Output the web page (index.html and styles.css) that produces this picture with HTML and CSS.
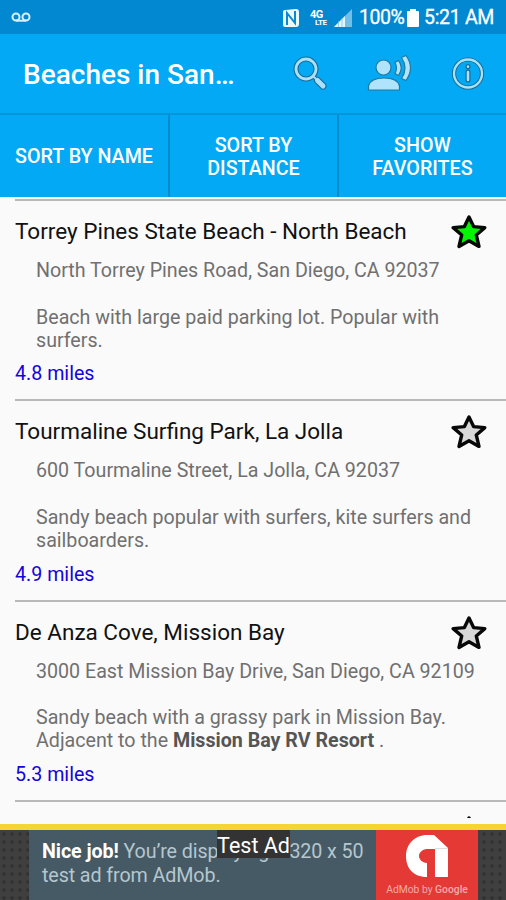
FILE: index.html
```html
<!DOCTYPE html>
<html lang="en">
<head>
<meta charset="utf-8">
<title>Beaches in San Diego</title>
<link rel="stylesheet" href="styles.css">
</head>
<body>
<svg width="0" height="0" class="defs">
  <symbol id="star" viewBox="0 0 36 36"><path d="M18 3l4.600 9.600 11.200 1-8.500 7.400 2.700 11.400L18 26.700 8 32.400l2.700-11.400-8.500-7.400 11.200-1z" stroke="#080808" stroke-width="3.400" stroke-linejoin="round"/></symbol>
</svg>
<div class="screen">
  <header class="status">
    <svg class="voicemail" width="20" height="11" viewBox="0 0 20 11" fill="none" stroke="#d7efff" stroke-width="2"><circle cx="5" cy="5" r="3.500"/><circle cx="15" cy="5" r="3.500"/><path d="M5 8.700h10"/></svg>
    <div class="indicators">
      <svg width="18" height="19" viewBox="0 0 18 19"><path d="M3 1L14 0q3 0 3 3v12q0 3-3 3L3 18q-2 0-2-2V3q0-2 2-2z" fill="#eaf7ff"/><path d="M5 16V4l8 10V2" fill="none" stroke="#0788d1" stroke-width="2"/></svg>
      <div class="lte"><span>4G</span><span class="low">LTE</span></div>
      <svg class="signal" width="18" height="18" viewBox="0 0 18 18"><path d="M0 18L18 0v18z" fill="#74bfe8"/><path d="M0 18L11 7v11z" fill="#e5f5ff"/><path d="M4.500 12v6M8 9v9" stroke="#74bfe8" stroke-width=".7"/></svg>
      <span class="pct">100%</span>
      <svg class="battery" width="12" height="18" viewBox="0 0 12 18"><path d="M3 0h6v2h2q1 0 1 1v14q0 1-1 1H1q-1 0-1-1V3q0-1 1-1h2z" fill="#fff"/></svg>
      <span class="time">5:21 AM</span>
    </div>
  </header>
  <div class="toolbar">
    <h1>Beaches in San…</h1>
    <svg class="actions" width="196" height="42" viewBox="0 0 196 42" fill="none">
      <g stroke-linecap="round">
        <circle cx="15" cy="15" r="10" stroke="#186b91" stroke-width="5"/><path d="M22 22l4 4" stroke="#186b91" stroke-width="4"/><path d="M26.500 26.500l5.500 5.500" stroke="#186b91" stroke-width="7"/>
        <circle cx="15" cy="15" r="10" stroke="#a9e0fb" stroke-width="2.800"/><path d="M22 22l4 4" stroke="#a9e0fb" stroke-width="2"/><path d="M26.500 26.500l5.500 5.500" stroke="#a9e0fb" stroke-width="5"/>
      </g>
      <g fill="#b0e4fc" stroke="#23799f" stroke-width="1.200">
        <circle cx="92.500" cy="13.500" r="7.500"/><path d="M77.500 36v-4q2-8 15.500-8t15.500 8v4z"/>
        <path d="M104 8.500l3.500-2q5.500 7.500 0 15l-3.500-2q3-5.500 0-11z"/><path d="M110.500 3.500l4.500-2q9 12.500 0 25l-4.500-2q7-10.500 0-21z"/>
      </g>
      <circle cx="177" cy="19.500" r="14" stroke="#186b91" stroke-width="4.200"/><circle cx="177" cy="19.500" r="14" stroke="#a9e0fb" stroke-width="2.300"/>
      <path d="M177 18v8M177 12.500v.2" stroke="#186b91" stroke-width="5" stroke-linecap="round"/><path d="M177 18v8M177 12.500v.2" stroke="#a9e0fb" stroke-width="2.600" stroke-linecap="round"/>
    </svg>
  </div>
  <nav class="tabs">
    <div class="tab">SORT BY NAME</div>
    <div class="tab">SORT BY<br>DISTANCE</div>
    <div class="tab">SHOW<br>FAVORITES</div>
  </nav>
  <main class="list">
    <article class="item">
      <div class="head"><h2>Torrey Pines State Beach - North Beach</h2><svg class="star on"><use href="#star"/></svg></div>
      <p class="addr">North Torrey Pines Road, San Diego, CA 92037</p>
      <p class="desc">Beach with large paid parking lot. Popular with<br>surfers.</p>
      <p class="dist">4.8 miles</p>
    </article>
    <article class="item">
      <div class="head"><h2>Tourmaline Surfing Park, La Jolla</h2><svg class="star"><use href="#star"/></svg></div>
      <p class="addr">600 Tourmaline Street, La Jolla, CA 92037</p>
      <p class="desc">Sandy beach popular with surfers, kite surfers and<br>sailboarders.</p>
      <p class="dist">4.9 miles</p>
    </article>
    <article class="item">
      <div class="head"><h2>De Anza Cove, Mission Bay</h2><svg class="star"><use href="#star"/></svg></div>
      <p class="addr">3000 East Mission Bay Drive, San Diego, CA 92109</p>
      <p class="desc">Sandy beach with a grassy park in Mission Bay.<br>Adjacent to the <b>Mission Bay RV Resort</b> .</p>
      <p class="dist">5.3 miles</p>
    </article>
    <article class="item"><div class="head"><h2></h2><svg class="star"><use href="#star"/></svg></div></article>
  </main>
  <footer class="ad">
    <div class="banner">
      <p class="copy"><b>Nice job!</b> You’re displaying a 320 x 50<br>test ad from AdMob.</p>
      <div class="brand">
        <svg width="44" height="44" viewBox="0 0 44 44"><path d="M22 43C8 43 1 34 1 22S10 1 22 1h7l14 13v29H30V15h-8c-5 0-8 4-8 7s3 7 8 7z" fill="#fff"/><path d="M30 14.500h13" stroke="#ddd"/></svg>
        <span>AdMob by <b>Google</b></span>
      </div>
    </div>
    <span class="label">Test Ad</span>
  </footer>
</div>
</body>
</html>
```
FILE: styles.css
```css
* { box-sizing: border-box; }
body, h1, h2, p { margin: 0; }
body { font-family: Roboto, sans-serif; background: #fafafa; }
.defs { position: absolute; }
.screen { width: 506px; height: 900px; overflow: hidden; display: flex; flex-direction: column; }
.status { height: 34px; flex: none; background: #0288d1; color: #fff; display: flex; align-items: center; justify-content: space-between; padding: 0 13px 0 11px; }
.indicators { display: flex; align-items: center; height: 34px; padding-top: 2px; }
.lte { width: 18px; height: 16px; margin-left: 10px; font-size: 11px; line-height: 9px; font-weight: 700; display: flex; flex-direction: column; letter-spacing: -.5px; }
.lte .low { font-size: 8px; line-height: 7px; padding-left: 5px; }
.signal { margin-left: 6px; }
.pct, .time { font-size: 19.500px; line-height: 34px; white-space: nowrap; -webkit-text-stroke: .3px #fff; }
.pct { width: 45px; margin-left: 7px; letter-spacing: -.5px; }
.battery { margin-left: 3px; }
.time { width: 69px; margin-left: 5px; letter-spacing: -.3px; }
.toolbar { height: 79px; flex: none; background: #03a9f4; display: flex; justify-content: space-between; align-items: flex-start; padding: 20px 19px 0 23px; }
.toolbar h1 { color: #fff; font-size: 28px; line-height: 42px; font-weight: 500; white-space: nowrap; }
.tabs { height: 84px; flex: none; display: grid; grid-template-columns: 168px 169px 1fr; background: #03a9f4; border-top: 2px solid #0496da; }
.tab { display: flex; align-items: center; justify-content: center; text-align: center; color: #fff; font-size: 19.700px; line-height: 23px; font-weight: 500; padding-top: 1px; white-space: nowrap; }
.tab + .tab { border-left: 2px solid #058bc9; }
.list { height: 621px; margin-bottom: 6px; flex: none; padding: 2px 0 0 15px; overflow: hidden; }
.item { height: 200.400px; border-top: 2px solid #b9b9b9; padding-top: 12px; }
.head { display: flex; justify-content: space-between; height: 36px; padding-right: 19px; }
.head h2 { font-size: 22.500px; line-height: 36px; font-weight: 400; color: #111; white-space: nowrap; }
.star { width: 36px; height: 36px; fill: #d8d8d8; flex: none; margin-top: 1px; }
.star.on { fill: #00f500; }
.addr, .desc { margin-left: 21px; font-size: 19.650px; line-height: 23.200px; color: #707070; white-space: nowrap; }
.addr { margin-top: 10px; }
.desc { margin-top: 23.300px; }
.desc b { color: #555; }
.dist { font-size: 19.650px; line-height: 24px; margin-top: 10.300px; color: #1404dc; }
.ad { position: relative; flex: 1; border-top: 6px solid #f5d52f; padding: 0 28px 0 29px; background: radial-gradient(circle, #323232 1.500px, transparent 2px) 0 0 / 8px 8px, #3f3f3f; }
.banner { display: flex; height: 70px; background: #455a64; }
.copy { width: 347px; padding: 10px 0 0 13px; font-size: 19.700px; line-height: 24px; letter-spacing: -.1px; color: #b6c6cf; white-space: nowrap; }
.copy b { color: #fff; }
.brand { flex: 1; background: #e53935; display: flex; flex-direction: column; align-items: center; padding-top: 4px; color: #f7aaa8; }
.brand span { font-size: 10.300px; line-height: 14px; margin-top: 5px; white-space: nowrap; }
.brand b { font-weight: 500; }
.label { position: absolute; left: 217px; top: 0; width: 73px; height: 28px; line-height: 31px; font-size: 21.500px; text-align: center; white-space: nowrap; color: #fff; background: #333; }
```
